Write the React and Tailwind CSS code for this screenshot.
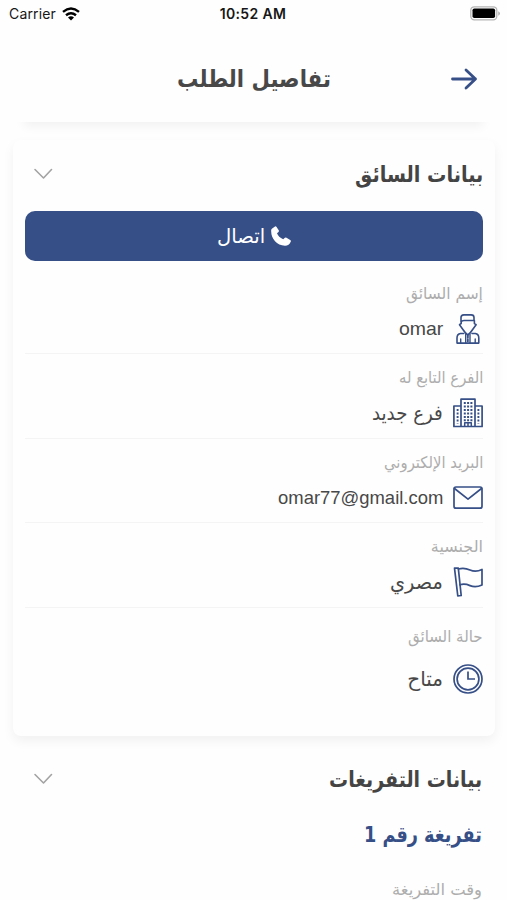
import { useLayoutEffect, useRef, useState } from "react";

// Condenses a line of text horizontally so that it fills the given width.
function FitText({ width, className = "", children }) {
  const ref = useRef(null);
  const [scale, setScale] = useState(1);
  useLayoutEffect(() => {
    const natural = ref.current.offsetWidth;
    if (natural) setScale(width / natural);
  }, [width, children]);
  return (
    <span className="flex shrink-0 justify-start" style={{ width }}>
      <span
        ref={ref}
        className={`inline-block shrink-0 origin-right whitespace-nowrap ${className}`}
        style={{ transform: `scaleX(${scale})` }}
      >
        {children}
      </span>
    </span>
  );
}

function Chevron() {
  return (
    <svg className="mr-auto h-3 w-5" viewBox="0 0 20 12" fill="none" stroke="#a3a3a3" strokeWidth="1.6" strokeLinecap="round" strokeLinejoin="round">
      <path d="M2 1.5 10.500 10l8-8.500" />
    </svg>
  );
}

const iconProps = {
  className: "h-[30px] w-[30px] shrink-0",
  viewBox: "0 0 30 30",
  fill: "none",
  stroke: "#364f87",
  strokeWidth: 1.7,
  strokeLinecap: "round",
  strokeLinejoin: "round",
};

function DriverIcon() {
  return (
    <svg {...iconProps} strokeWidth="1.6">
      <path d="M8 6.500V3.600Q8 .9 10.800.9h7.400Q21 .9 21 3.500v3H11Q9 6.500 8.200 7.700z" />
      <path d="M8.200 7.700v1.800l-1.700 1.200 3.800 5.300q1.800 3 4.500 5 2.700-2 4.500-5l3.800-5.300-1.700-1.200V6.500" />
      <path d="M10.800 19.500H7.500q-3.500.5-3.500 4.500v5.100h21.800V24q0-4-3.500-4.500H19" />
      <path d="M12.700 20v9M17 20v9M7.700 25V29M22.200 25V29" strokeWidth="1.400" />
      <path d="M14.850 21.500v7" strokeWidth="1.800" strokeDasharray="2.300 1.500" />
    </svg>
  );
}

function BuildingIcon() {
  return (
    <svg {...iconProps} strokeWidth="1.7" strokeLinecap="butt">
      <path d="M8 28.500V1.200h14v27.300M8 8H.900v20.500h28.200V8H22" />
      <path d="M10.800 5h9M10.800 8.500h9M10.800 12h9M10.800 15.500h9M10.800 19h9M10.800 22.200h9" strokeWidth="1.9" strokeDasharray="2 1.300" />
      <path d="M4.600 11v14.500M25.400 11v14.500" strokeWidth="1.9" strokeDasharray="2 1.500" />
      <path d="M11.700 28.500v-3.800h6.600v3.800M15 25v4" strokeWidth="1.500" />
    </svg>
  );
}

function MailIcon() {
  return (
    <svg {...iconProps}>
      <rect x="1" y="4" width="28" height="21.200" rx="2" />
      <path d="m1.500 5.500 13.500 10.700L28.500 5.500" />
    </svg>
  );
}

function FlagIcon() {
  return (
    <svg {...iconProps} strokeWidth="1.700">
      <path d="M1.500 1.200h3.800L8.200 28.500l-3.400.5z" />
      <path d="M5.500 2c5-1.400 8-.6 11.500 1s7 2 12-.5V18c-5 2.300-8.500 2.100-12 .6s-5.500-2.300-10-.8" />
    </svg>
  );
}

function ClockIcon() {
  return (
    <svg {...iconProps} strokeWidth="1.700">
      <circle cx="15" cy="15" r="14" />
      <circle cx="15" cy="15" r="10.900" />
      <path d="M15 7.500V15h7" strokeLinecap="butt" strokeLinejoin="miter" />
    </svg>
  );
}

function Field({ label, labelWidth, value, valueWidth, latin, icon, last }) {
  return (
    <div className={last ? "h-[105px] pt-[17px]" : "h-[84.4px] border-b border-[#f4f4f4] pt-3"}>
      <div className="flex h-6 items-center text-[16px] text-[#adadad]">
        <FitText width={labelWidth}>{label}</FitText>
      </div>
      <div className={`flex h-[30px] items-center gap-2.5 text-[#484848] ${last ? "mt-[15px]" : "mt-2"}`}>
        {icon}
        <FitText
          width={valueWidth}
          className={latin ? "font-['Liberation_Sans',sans-serif] text-[19px]" : "text-[20px]"}
        >
          {value}
        </FitText>
      </div>
    </div>
  );
}

export default function App() {
  return (
    <div dir="rtl" className="flex h-[900px] w-[507px] flex-col overflow-hidden bg-[#fefefe] font-['DejaVu_Sans',sans-serif]">
      <div dir="ltr" className="grid h-7 shrink-0 grid-cols-3 items-center pr-[7px] pb-px pl-[9px] font-['Inter','Liberation_Sans',sans-serif] text-[14px] text-[#171717]">
        <div className="flex items-center gap-[6px]">
          <span className="tracking-[0.15px]">Carrier</span>
          <svg className="h-[14px] w-[18px]" viewBox="0 0 18 14" fill="none" stroke="#000" strokeWidth="2.400">
            <path d="M1 4.800q8-6.700 16 0M4 8.200q5-4.100 10 0" />
            <path d="M6 10.500q3-2.500 6 0l-3 3z" fill="#000" stroke="none" />
          </svg>
        </div>
        <div className="-mr-px -ml-1 text-center text-[14px] font-semibold tracking-[0.35px] whitespace-nowrap">10:52 AM</div>
        <svg className="ml-auto h-[15px] w-[30px]" viewBox="0 0 30 15">
          <rect x="0.800" y="0.800" width="26" height="13" rx="3.500" fill="#fff" stroke="#b5b5b5" strokeWidth="1.300" />
          <rect x="2.500" y="2.500" width="22.600" height="9.600" rx="1.800" fill="#000" />
          <path d="M28.300 5.300q1.600.7 1.600 2.200t-1.600 2.200z" fill="#aaa" />
        </svg>
      </div>

      <header className="mx-[15px] flex h-[94px] shrink-0 items-center bg-[#fefefe] px-[5px] pt-2 shadow-[0_13px_10px_-9px_rgba(0,0,0,0.055)]">
        <svg className="mr-[9px] h-6 w-7" viewBox="0 0 28 24" fill="none" stroke="#364f87" strokeWidth="2.800" strokeLinecap="round" strokeLinejoin="round">
          <path d="M2.500 12h23M16 3l9.500 9-9.500 9" />
        </svg>
        <div className="mr-[119px] flex text-[24px] font-bold text-[#484848]">
          <FitText width={154}>تفاصيل الطلب</FitText>
        </div>
      </header>

      <section className="mt-[18px] mr-3 ml-[13px] h-[596px] shrink-0 rounded-lg bg-[#fefefe] px-3 shadow-[0_5px_12px_rgba(0,0,0,0.055)]">
        <div className="flex h-[71px] items-center pb-[3px] pl-2 text-[22px] font-bold text-[#444]">
          <FitText width={128}>بيانات السائق</FitText>
          <Chevron />
        </div>
        <button className="flex h-[50px] w-full items-center justify-center gap-[6px] rounded-[10px] bg-[#364f87] text-[20px] text-white">
          <svg className="h-5 w-5" viewBox="0 0 20 20" fill="#fff">
            <path d="M1.200 2.500 4 .4q.8-.5 1.400.4l2.300 3.500q.5.9-.2 1.600L6 7.300q1.400 3.900 6.200 5.900l1.700-1.400q.8-.6 1.600-.1l3.700 2.200q1 .6.6 1.500-1.800 4.400-5.900 4.300C5.900 19.400.2 12.800.2 5.500.1 4 .2 3.200 1.200 2.500z" />
          </svg>
          <FitText width={48}>اتصال</FitText>
        </button>
        <div className="pt-[9px]">
          <Field label="إسم السائق" labelWidth={77} value="omar" valueWidth={44} latin icon={<DriverIcon />} />
          <Field label="الفرع التابع له" labelWidth={84} value="فرع جديد" valueWidth={71} icon={<BuildingIcon />} />
          <Field label="البريد الإلكتروني" labelWidth={99} value="omar77@gmail.com" valueWidth={165} latin icon={<MailIcon />} />
          <Field label="الجنسية" labelWidth={52} value="مصري" valueWidth={53} icon={<FlagIcon />} />
          <Field label="حالة السائق" labelWidth={75} value="متاح" valueWidth={36} icon={<ClockIcon />} last />
        </div>
      </section>

      <section className="px-[25px] pt-[13px]">
        <div className="flex h-[60px] items-center pl-2 text-[22px] font-bold text-[#444]">
          <FitText width={153}>بيانات التفريغات</FitText>
          <Chevron />
        </div>
        <div className="flex h-[50px] items-center text-[22px] font-bold text-[#364f87]">
          <FitText width={118}>تفريغة رقم 1</FitText>
        </div>
        <div className="mt-[19px] flex h-6 items-center text-[16px] text-[#adadad]">
          <FitText width={90}>وقت التفريغة</FitText>
        </div>
      </section>
    </div>
  );
}
